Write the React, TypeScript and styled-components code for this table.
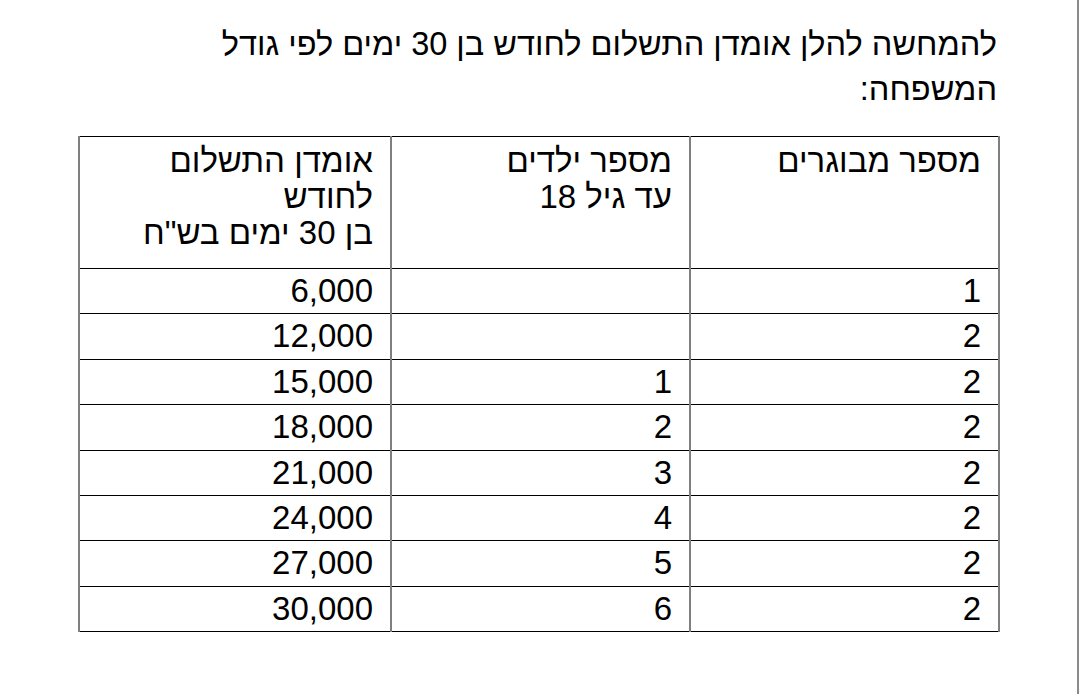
import React from "react";
import styled, { createGlobalStyle } from "styled-components";

const GlobalStyle = createGlobalStyle`
  html, body {
    margin: 0;
    padding: 0;
    background: #ffffff;
  }
  body {
    font-family: "Liberation Sans", Arial, sans-serif;
    color: #000;
  }
`;

const Page = styled.div`
  box-sizing: border-box;
  width: 1079px;
  height: 694px;
  border-right: 2px solid #8a8a8a;
  background: #fff;
  padding: 22px 77px 0 80px;
  direction: rtl;
`;

const Title = styled.p`
  margin: 0 3px 0 0;
  max-width: 800px;
  font-size: 32.5px;
  line-height: 45px;
  text-align: right;
`;

const Table = styled.table`
  margin-top: 24px;
  width: 920px;
  border-collapse: collapse;
  table-layout: fixed;
  direction: rtl;
  font-size: 33px;
`;

const Col = styled.col<{ $w: number }>`
  width: ${(p) => p.$w}px;
`;

const Cell = styled.td<{ $head?: boolean }>`
  border-left: 2px solid #7f7f7f;
  border-right: 2px solid #7f7f7f;
  border-top: 1px solid #000;
  border-bottom: 1px solid #000;
  padding: ${(p) => (p.$head ? "6px 17px 14px" : "4px 17px 4.4px")};
  height: ${(p) => (p.$head ? "111px" : "36px")};
  line-height: 36px;
  font-weight: normal;
  text-align: right;
  vertical-align: top;
`;

const HeadCell = styled(Cell).attrs({ as: "th", $head: true })``;

const rows = [
  ["1", "", "6,000"],
  ["2", "", "12,000"],
  ["2", "1", "15,000"],
  ["2", "2", "18,000"],
  ["2", "3", "21,000"],
  ["2", "4", "24,000"],
  ["2", "5", "27,000"],
  ["2", "6", "30,000"],
];

export default function App() {
  return (
    <>
      <GlobalStyle />
      <Page>
        <Title>
          להמחשה להלן אומדן התשלום לחודש בן 30 ימים לפי גודל המשפחה:
        </Title>
        <Table>
          <colgroup>
            <Col $w={309} />
            <Col $w={299} />
            <Col $w={312} />
          </colgroup>
          <thead>
            <tr>
              <HeadCell>מספר מבוגרים</HeadCell>
              <HeadCell>
                מספר ילדים
                <br />
                עד גיל 18
              </HeadCell>
              <HeadCell>
                אומדן התשלום
                <br />
                לחודש
                <br />
                בן 30 ימים בש"ח
              </HeadCell>
            </tr>
          </thead>
          <tbody>
            {rows.map((r, i) => (
              <tr key={i}>
                {r.map((c, j) => (
                  <Cell key={j}>{c}</Cell>
                ))}
              </tr>
            ))}
          </tbody>
        </Table>
      </Page>
    </>
  );
}
